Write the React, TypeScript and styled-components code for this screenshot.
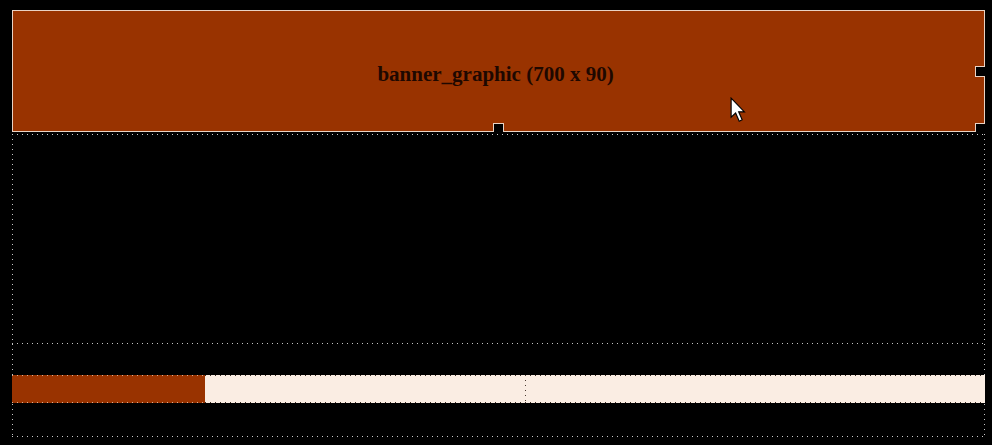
import React from "react";
import styled, { createGlobalStyle, css } from "styled-components";

const GlobalStyle = createGlobalStyle`
  html, body {
    margin: 0;
    padding: 0;
    background: #000;
  }
  body {
    width: 992px;
    height: 445px;
    overflow: hidden;
    font-family: "Liberation Serif", "Times New Roman", serif;
  }
`;

const dotH = (color: string) => css`
  repeating-linear-gradient(to right, ${color} 0 1px, transparent 1px 5px)
`;
const dotV = (color: string) => css`
  repeating-linear-gradient(to bottom, ${color} 0 1px, transparent 1px 5px)
`;

const Page = styled.div`
  position: relative;
  padding: 10px 0 0 12px;
`;

const Frame = styled.div`
  position: relative;
  width: 973px;
  height: 427px;
  display: flex;
  flex-direction: column;
  background-image: ${dotV("#c8c8c8")}, ${dotV("#c8c8c8")}, ${dotH("#c8c8c8")};
  background-size: 1px calc(100% - 124px), 1px calc(100% - 124px), 100% 1px;
  background-position: left bottom, right bottom, left bottom;
  background-repeat: no-repeat;
`;

const Banner = styled.div`
  position: relative;
  height: 122px;
  box-sizing: border-box;
  border: 1px solid #ead3c4;
  background: #993300;
  display: flex;
  align-items: center;
  justify-content: center;
  padding-top: 6px;
`;

const BannerLabel = styled.span`
  font-weight: bold;
  font-size: 21px;
  color: #1e0800;
  margin-left: -6px;
`;

const Handle = styled.div<{ $side: "bottom" | "right" }>`
  position: absolute;
  width: 9px;
  height: 8px;
  background: #000;
  border: 1px solid #ead3c4;
  ${(p) => (p.$side === "bottom" ? "border-bottom: none;" : "border-right: none;")}
`;

const BottomHandle = styled(Handle)`
  left: 480px;
  bottom: -1px;
`;

const RightHandle = styled(Handle)`
  right: -1px;
  top: 55px;
  height: 9px;
`;

const CornerHandle = styled(Handle)`
  right: -1px;
  bottom: -1px;
  border-bottom: none;
`;

const Row = styled.div<{ $height: number }>`
  height: ${(p) => p.$height}px;
  background-image: ${dotH("#c8c8c8")};
  background-size: 100% 1px;
  background-repeat: no-repeat;
  background-position: left 2px;
`;

const LastRow = styled.div`
  flex: 1;
  padding-top: 32px;
  background-image: ${dotH("#c8c8c8")};
  background-size: 100% 1px;
  background-repeat: no-repeat;
  background-position: left top;
`;

const Bar = styled.div`
  display: flex;
  height: 28px;
`;

const Segment = styled.div<{ $color: string; $dots: string; $width?: number }>`
  position: relative;
  background-color: ${(p) => p.$color};
  ${(p) => (p.$width ? `width: ${p.$width}px;` : "flex: 1;")}
  background-image: ${(p) => dotH(p.$dots)}, ${(p) => dotH(p.$dots)};
  background-size: 100% 1px, 100% 1px;
  background-position: left top, left bottom;
  background-repeat: no-repeat;
`;

const CellRule = styled.div<{ $left: number }>`
  position: absolute;
  top: 0;
  bottom: 0;
  left: ${(p) => p.$left}px;
  width: 1px;
  background-image: ${dotV("#4a3a30")};
`;

const Cursor = styled.svg`
  position: absolute;
  left: 730px;
  top: 97px;
`;

export default function App() {
  return (
    <>
      <GlobalStyle />
      <Page>
        <Frame>
          <Banner>
            <BannerLabel>banner_graphic (700 x 90)</BannerLabel>
            <BottomHandle $side="bottom" />
            <RightHandle $side="right" />
            <CornerHandle $side="right" />
          </Banner>
          <Row $height={211} />
          <LastRow>
            <Bar>
              <Segment $color="#993300" $dots="#e0b090" $width={193} />
              <Segment $color="#faede3" $dots="#3a2a20">
                <CellRule $left={320} />
              </Segment>
            </Bar>
          </LastRow>
        </Frame>
        <Cursor width="18" height="27" viewBox="0 0 16 24">
          <path
            d="M1 1 L1 18 L5 14.2 L8.2 21.5 L10.8 20.3 L7.7 13.2 L12.8 13.2 Z"
            fill="#fff"
            stroke="#000"
            strokeWidth="1"
            strokeLinejoin="miter"
          />
        </Cursor>
      </Page>
    </>
  );
}
